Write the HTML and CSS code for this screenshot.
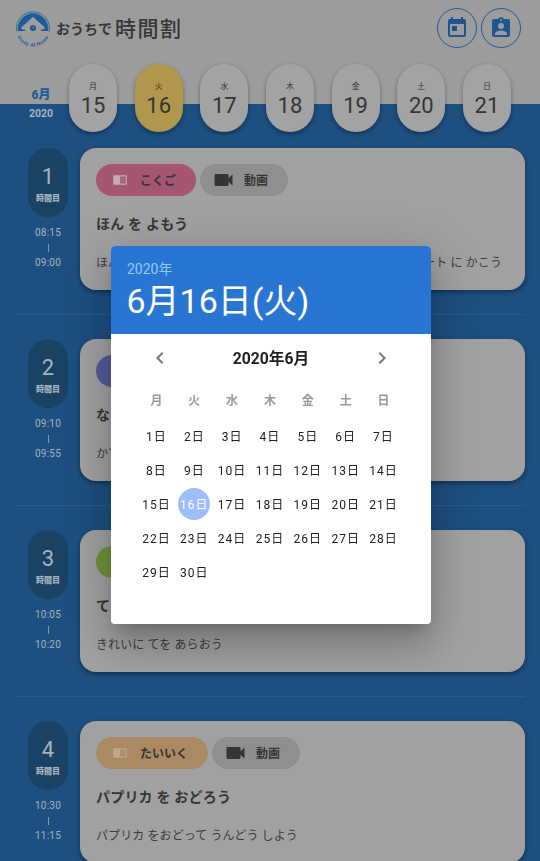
FILE: index.html
```
<!DOCTYPE html>
<html lang="ja">
<head>
<meta charset="utf-8">
<title>おうちで時間割</title>
<link rel="stylesheet" href="styles.css">
</head>
<body>
<svg class="defs" width="0" height="0">
  <symbol id="book" viewBox="0 0 14 10"><path fill="currentColor" fill-rule="evenodd" d="M1 .3h12c.5 0 .8.300.8.800v7.800c0 .5-.3.800-.8.800H1c-.5 0-.8-.3-.8-.8V1.100C.2.600.5.300 1 .3zM7.200 1.500v7h5.500v-7z"/><path fill="currentColor" opacity=".35" d="M8 3h4v1H8zm0 1.700h4v1H8zm0 1.700h4v1H8z"/></symbol>
  <symbol id="video" viewBox="0 0 18 12"><path fill="currentColor" d="M1.200 0h11.600c.7 0 1.200.5 1.200 1.200v3L18 .6v10.800l-4-3.600v3c0 .7-.5 1.200-1.200 1.200H1.200C.5 12 0 11.500 0 10.800V1.200C0 .5.5 0 1.200 0z"/></symbol>
</svg>
<header class="top">
  <div class="bar">
    <svg class="logo" viewBox="0 0 34 34">
      <path d="M.8 19.500A16.500 16.500 0 1 1 33.200 19.500" fill="none" stroke="#1d5c98" stroke-width=".8"/>
      <path d="M2 19A15.200 15.200 0 1 1 32 19z" fill="#1d5c98"/>
      <path d="M17 4.800 28.800 15.500Q29 17.500 27 17.500h-2V21H9v-3.500H7Q5 17.500 5.200 15.500z" fill="#9e9e9e"/>
      <circle cx="17" cy="16" r="3.100" fill="#1d5c98"/>
      <path d="M17 14.200V16h1.300" fill="none" stroke="#9e9e9e" stroke-width=".6"/>
      <path id="arc" d="M0 20A17.200 17.200 0 0 0 34 20" fill="none"/>
      <text class="logo-text"><textPath href="#arc" startOffset="50%" text-anchor="middle">Study At Home</textPath></text>
    </svg>
    <h1 class="brand"><span class="brand-small">おうちで</span><span class="brand-large">時間割</span></h1>
    <div class="actions">
      <a class="round"><svg viewBox="0 0 24 24"><path d="M19 3h-1V1h-2v2H8V1H6v2H5a2 2 0 0 0-2 2v14c0 1.100.9 2 2 2h14a2 2 0 0 0 2-2V5a2 2 0 0 0-2-2zm0 16H5V8h14zM7 10h5v5H7z"/></svg></a>
      <a class="round"><svg viewBox="0 0 24 24"><path d="M19 3h-4.200a3 3 0 0 0-5.600 0H5a2 2 0 0 0-2 2v14c0 1.100.9 2 2 2h14a2 2 0 0 0 2-2V5a2 2 0 0 0-2-2zm-7 0a1 1 0 1 1 0 2 1 1 0 0 1 0-2zm0 4a3 3 0 1 1 0 6 3 3 0 0 1 0-6zm6 12H6v-1.400c0-2 4-3.100 6-3.100s6 1.100 6 3.100z"/></svg></a>
    </div>
  </div>
  <nav class="week">
    <div class="month"><b>6月</b><span>2020</span></div>
    <div class="days">
      <div class="day"><small>月</small>15</div>
      <div class="day today"><small>火</small>16</div>
      <div class="day"><small>水</small>17</div>
      <div class="day"><small>木</small>18</div>
      <div class="day"><small>金</small>19</div>
      <div class="day"><small>土</small>20</div>
      <div class="day"><small>日</small>21</div>
    </div>
  </nav>
</header>
<main class="lessons">
  <section class="lesson">
    <div class="when"><div class="period">1<small>時間目</small></div><div class="time">08:15<i></i>09:00</div></div>
    <article class="card">
      <div class="chips"><span class="chip kokugo"><svg class="book"><use href="#book"/></svg>こくご</span><span class="chip"><svg class="video"><use href="#video"/></svg>動画</span></div>
      <h2>ほん を よもう</h2>
      <p class="spread"><span>ほん</span><span>ノート に かこう</span></p>
    </article>
  </section>
  <section class="lesson">
    <div class="when"><div class="period">2<small>時間目</small></div><div class="time">09:10<i></i>09:55</div></div>
    <article class="card">
      <div class="chips"><span class="chip violet"></span></div>
      <h2>な</h2>
      <p>かて</p>
    </article>
  </section>
  <section class="lesson">
    <div class="when"><div class="period">3<small>時間目</small></div><div class="time">10:05<i></i>10:20</div></div>
    <article class="card">
      <div class="chips"><span class="chip green"></span></div>
      <h2>て</h2>
      <p>きれいに てを あらおう</p>
    </article>
  </section>
  <section class="lesson">
    <div class="when"><div class="period">4<small>時間目</small></div><div class="time">10:30<i></i>11:15</div></div>
    <article class="card">
      <div class="chips"><span class="chip taiiku"><svg class="book"><use href="#book"/></svg>たいいく</span><span class="chip"><svg class="video"><use href="#video"/></svg>動画</span></div>
      <h2>パプリカ を おどろう</h2>
      <p>パプリカ をおどって うんどう しよう</p>
    </article>
  </section>
</main>
<div class="modal">
  <div class="picker">
    <div class="picker-title"><div class="year">2020年</div><div class="date">6月16日(火)</div></div>
    <div class="picker-nav">
      <svg viewBox="0 0 24 24"><path d="M15.400 7.400 14 6l-6 6 6 6 1.400-1.400L10.800 12z"/></svg>
      <b>2020年6月</b>
      <svg viewBox="0 0 24 24"><path d="M8.600 16.600 13.200 12 8.600 7.400 10 6l6 6-6 6z"/></svg>
    </div>
    <div class="grid names"><b>月</b><b>火</b><b>水</b><b>木</b><b>金</b><b>土</b><b>日</b></div>
    <div class="grid dates">
      <span>1日</span><span>2日</span><span>3日</span><span>4日</span><span>5日</span><span>6日</span><span>7日</span>
      <span>8日</span><span>9日</span><span>10日</span><span>11日</span><span>12日</span><span>13日</span><span>14日</span>
      <span>15日</span><span class="selected">16日</span><span>17日</span><span>18日</span><span>19日</span><span>20日</span><span>21日</span>
      <span>22日</span><span>23日</span><span>24日</span><span>25日</span><span>26日</span><span>27日</span><span>28日</span>
      <span>29日</span><span>30日</span>
    </div>
  </div>
</div>
</body>
</html>
```
FILE: styles.css
```
* { box-sizing: border-box; }
html { height: 861px; overflow: hidden; }
body {
  display: flex;
  flex-direction: column;
  margin: 0;
  height: 861px;
  overflow: hidden;
  background: #1d4f80;
  color: #353535;
  font-family: Roboto, "Noto Sans CJK JP", sans-serif;
}
.defs { position: absolute; }
.top { flex: none; height: 132px; background: linear-gradient(#9c9c9c 104px, #1d4f80 104px); }
.bar { display: flex; height: 64px; padding: 8px 19px 0 16px; align-items: flex-start; }
.logo { width: 34px; height: 34px; margin-top: 4px; overflow: visible; }
.logo-text { font-size: 4.800px; font-weight: 700; fill: #1d5c98; letter-spacing: .5px; }
.brand { display: flex; align-items: center; margin: 0 0 0 6px; height: 42px; color: #363636; line-height: 1; }
.brand-small { font-size: 14px; font-weight: 700; margin-right: 3px; }
.brand-large { font-size: 21px; font-weight: 500; letter-spacing: 1.500px; }
.actions { display: flex; gap: 4px; margin-left: auto; }
.round { display: flex; width: 40px; height: 40px; border: 1px solid #1d5c98; border-radius: 50%; align-items: center; justify-content: center; }
.round svg { width: 24px; height: 24px; fill: #1d5592; }
.week { display: flex; height: 68px; }
.month { width: 69px; padding: 21px 0 0 13px; text-align: center; font-size: 10.500px; font-weight: 700; color: #a9b4bd; }
.month b { display: block; font-size: 12px; line-height: 20px; color: #1d5c98; }
.month span { display: block; line-height: 18px; }
.days { display: flex; width: 442px; justify-content: space-between; }
.day { width: 48px; height: 68px; padding-top: 17px; border-radius: 24px; background: #a3a3a3; text-align: center; font-size: 22px; line-height: 26px; box-shadow: 0 2px 4px rgba(0,0,0,.35); }
.day small { display: block; font-size: 8px; line-height: 12px; }
.today { background: #b1974b; }
.lessons { flex: 1; min-height: 0; overflow: hidden; padding: 16px 15px 0 16px; }
.lesson { display: flex; height: 167px; margin-bottom: 24px; border-bottom: 1px solid #2b5a89; }
.when { width: 64px; padding-left: 12px; color: #a7b3bd; text-align: center; }
.period { width: 40px; height: 69px; padding-top: 16px; border-radius: 20px; background: #1a4264; font-size: 22px; line-height: 26px; }
.period small { display: block; font-size: 8px; line-height: 17px; font-weight: 900; }
.time { width: 40px; padding-top: 8px; font-size: 10px; line-height: 15px; letter-spacing: .2px; white-space: nowrap; }
.time i { display: block; width: 1px; height: 8px; margin: 4px auto 3px; background: #7f9ab1; }
.card { flex: 1; height: 142px; padding: 16px; border-radius: 16px; background: #a1a1a1; box-shadow: 0 2px 5px rgba(0,0,0,.4); }
.chips { display: flex; gap: 4px; }
.chip { display: flex; height: 32px; min-width: 88px; padding: 0 20px 2px 14px; gap: 11px; border-radius: 16px; align-items: center; background: #8f8f8f; font-size: 12px; font-weight: 700; }
.chip svg { position: relative; top: 1px; }
.book { width: 14px; height: 10px; margin: 0 2px 0 3px; color: #c2aeb6; }
.video { width: 19px; height: 12px; }
.kokugo { background: #a65673; }
.violet { background: #535b9d; }
.green { background: #6e9239; }
.taiiku { background: #a98a62; }
.taiiku .book { color: #bea88b; }
.card h2 { margin: 16px 0 0; font-size: 14px; line-height: 24px; letter-spacing: .2px; }
.card p { margin: 17px 0 0; font-size: 12px; line-height: 20px; color: #3c3c3c; letter-spacing: .1px; }
.card .spread { display: flex; justify-content: space-between; padding-right: 7px; }
.modal { position: fixed; inset: 0; display: flex; padding-top: 9px; padding-left: 2px; align-items: center; justify-content: center; }
.picker { width: 320px; height: 378px; border-radius: 4px; overflow: hidden; background: #fff; color: #202020; box-shadow: 0 11px 15px -7px rgba(0,0,0,.2), 0 24px 38px 3px rgba(0,0,0,.14), 0 9px 46px 8px rgba(0,0,0,.12); }
.picker-title { height: 88px; padding: 15px 16px; background: #2976d2; color: #fff; }
.year { font-size: 14px; line-height: 16px; color: #94c9f6; }
.date { margin-left: -.5px; font-size: 34px; line-height: 48px; white-space: nowrap; }
.picker-nav { display: flex; height: 48px; padding: 0 37px; align-items: center; justify-content: space-between; }
.picker-nav b { position: relative; top: -1px; font-size: 15.700px; }
.picker-nav svg { width: 24px; height: 24px; fill: #757575; }
.grid { display: grid; grid-template-columns: repeat(7, 37.850px); width: 265px; margin: 0 0 0 26.500px; text-align: center; font-size: 12px; }
.names { height: 38px; line-height: 39px; color: #999; }
.dates { grid-auto-rows: 34px; letter-spacing: 1px; line-height: 34px; }
.dates span { display: flex; justify-content: center; width: 32px; height: 32px; margin: 0 auto; white-space: nowrap; }
.dates .selected { border-radius: 50%; background: #9dbdff; color: #fff; }
```
